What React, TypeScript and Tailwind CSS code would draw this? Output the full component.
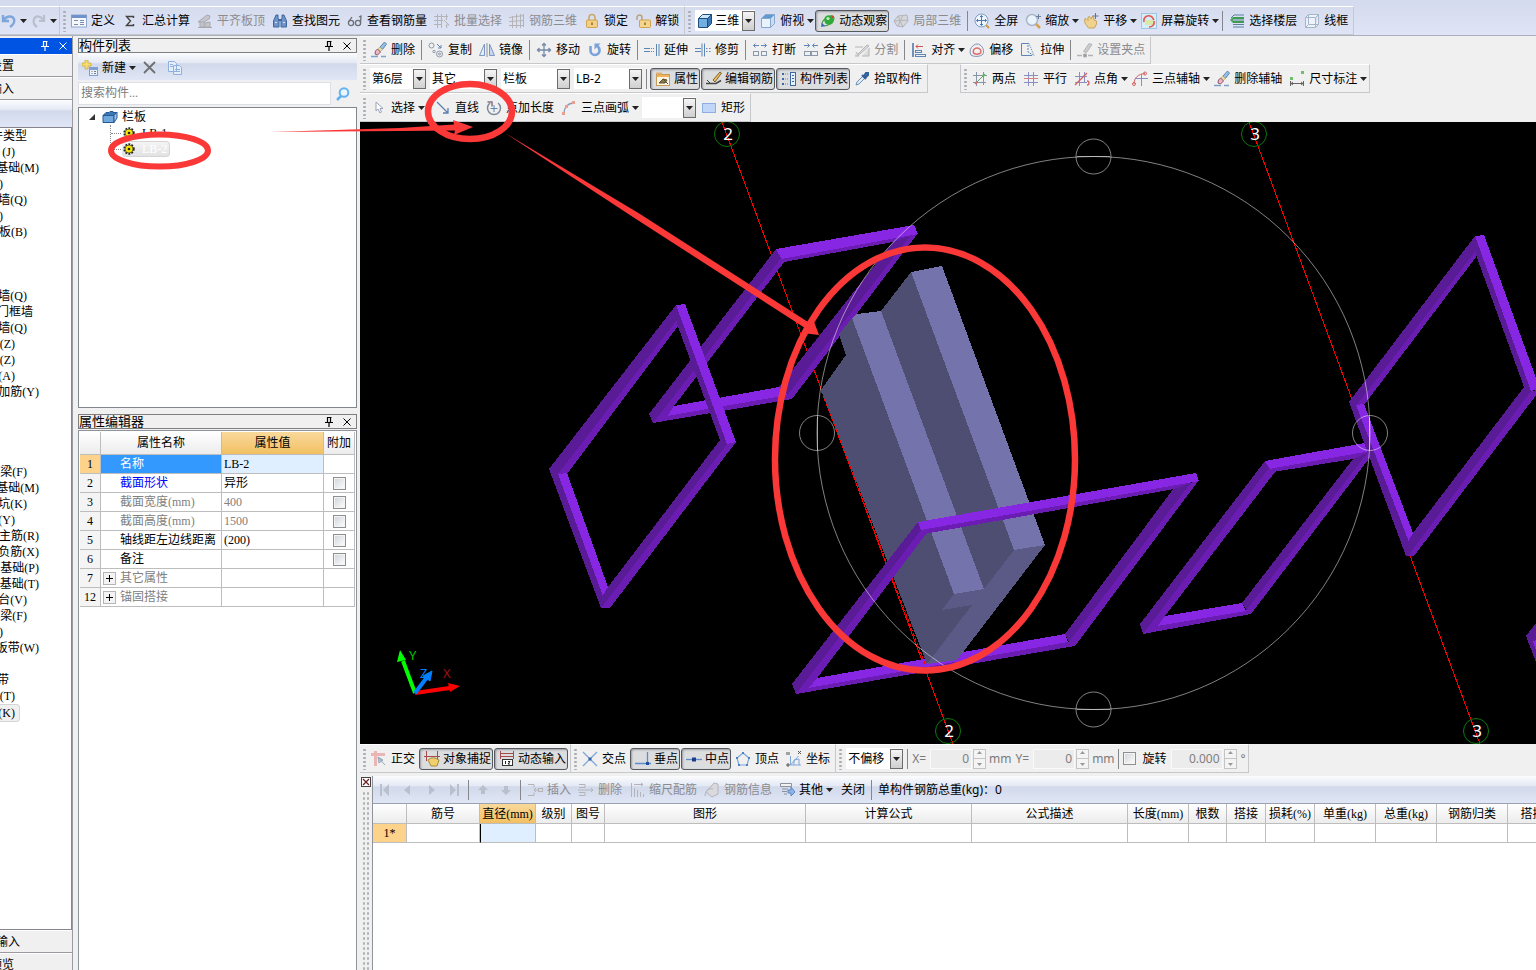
import type { ReactNode } from "react";

const UI = "font-['Noto_Sans','Noto_Sans_CJK_SC',sans-serif]";
const SONG = "font-['Liberation_Serif','Noto_Sans_CJK_SC',serif]";
const BAR_FILL = "bg-[linear-gradient(to_bottom,#fbfcfe_0%,#e4e9f4_36%,#d1d9ea_40%,#e0e6f6_100%)]";

const B = "#5d86b5";
const G = "#b4b4b8";

const ICONS: Record<string, ReactNode> = {
  undo: <path d="M2 2v6h6M3 7c2-4 8-5 10-1 1 3-1 6-4 8" fill="none" stroke="#7fa6dc" strokeWidth="2.4" />,
  redo: <path d="M13 2v6H8M12 7C10 3 5 2 3 6c-1 3 0 6 3 8" fill="none" stroke="#b9bfcc" strokeWidth="2.2" />,
  define: (
    <g>
      <rect x="0.5" y="2" width="15" height="12" fill="#f4f8fd" stroke="#8ea6cc" />
      <path d="M0.5 3.5h15" stroke="#6f93c8" strokeWidth="3" />
      <path d="M3 7.5h4M3 11.5h4M9 7.5h4M9 9.5h4M9 11.5h4" stroke="#7b8aa5" />
    </g>
  ),
  sigma: <path d="M11.5 5V3.500h-7l4 4.500-4 4.500h7V11" fill="none" stroke="#444" strokeWidth="1.400" />,
  level: (
    <g fill="#c4c6cb" stroke="#a6a8ae">
      <path d="M1 9l9-7 3 1-1 3-5 3zM3 9v5h4V9M8 10v4h5V9z" />
      <path d="M1 14.500h14" />
    </g>
  ),
  find: (
    <g fill="#6e93c9" stroke="#3f669f">
      <path d="M4 2h2v3l1 3v6H1.500V8zM10 2h2l2.500 6v6H9V8l1-3z" />
      <path d="M6.500 7h3" strokeWidth="2" />
      <path d="M3 9.500h2M11 9.500h2" stroke="#dbe8f8" />
    </g>
  ),
  glasses: (
    <g fill="none" stroke="#6b7076" strokeWidth="1.300">
      <circle cx="4" cy="10" r="2.600" />
      <circle cx="11" cy="10" r="2.600" />
      <path d="M1.500 9L5 4M13.500 10L14 3l-2 1" />
    </g>
  ),
  batch: (
    <g fill="none" stroke={G}>
      <path d="M0 3.500h14M0 7.500h9M0 11.500h8M3.500 1v14M7.500 1v14M12.500 1v6" />
      <path d="M10 7l5 5h-3l1 3" fill="#ddd" />
    </g>
  ),
  mesh: <path d="M0 4.500l15-2M0 8.500l15-1M0 12.500h15M3.500 3v12M7.500 1v14M11.500 1v14M14.500 1v13" fill="none" stroke={G} />,
  lock: (
    <g>
      <path d="M5 7V4.500a3 3 0 016 0V7" fill="none" stroke="#c9a867" strokeWidth="1.600" />
      <rect x="2.500" y="7" width="11" height="7.500" rx="1" fill="#f3cf83" stroke="#d0a24c" />
      <path d="M8 9.500v2.500" stroke="#8a6a2b" strokeWidth="1.500" />
    </g>
  ),
  unlock: (
    <g>
      <path d="M2 7V4.500a2.500 2.500 0 015 0V7" fill="none" stroke="#b9a37a" strokeWidth="1.500" />
      <rect x="4.500" y="7" width="11" height="7.500" rx="1" fill="#f5d48c" stroke="#d0a24c" />
      <path d="M10 9.500v2.500" stroke="#8a6a2b" strokeWidth="1.500" />
    </g>
  ),
  cube: (
    <g stroke="#1f4d80" strokeLinejoin="round">
      <path d="M1.500 5.500h9v9h-9z" fill="#72aee0" />
      <path d="M1.500 5.500l4-4h9l-4 4z" fill="#cfe6fa" />
      <path d="M10.500 5.500l4-4v9l-4 4z" fill="#3c78b4" />
    </g>
  ),
  cubeTop: (
    <g stroke="#86a7cb" strokeLinejoin="round">
      <path d="M1.500 5.500h9v9h-9z" fill="#e9f3fc" />
      <path d="M1.500 5.500l4-4h9l-4 4z" fill="#5f9bd0" />
      <path d="M10.500 5.500l4-4v9l-4 4z" fill="#c9def2" />
    </g>
  ),
  orbit: (
    <g>
      <ellipse cx="8" cy="8" rx="7" ry="3.500" fill="none" stroke="#3f8f3f" transform="rotate(-35 8 8)" />
      <circle cx="9" cy="7" r="4.800" fill="#2faa3a" />
      <circle cx="8" cy="5.500" r="1.600" fill="#bff0b8" />
      <path d="M11 2l3 1-1 3z" fill="#d4402c" />
      <path d="M1 14l1-4 3 3z" fill="#3567b5" />
    </g>
  ),
  part3d: (
    <g fill="#d5d7dc" stroke={G}>
      <path d="M1 8l4-5 9-1 1 6-5 6-6-1z" />
      <path d="M5 3l5 11M1 8l14-1M10 2l-5 11" fill="none" />
    </g>
  ),
  full: (
    <g>
      <circle cx="7.500" cy="7.500" r="6.500" fill="#eef5fd" stroke="#7f9fcc" />
      <path d="M7.500 2.500v10M2.500 7.500h10M6 4l1.500-1.500L9 4M6 11l1.500 1.500L9 11M4 6L2.500 7.500 4 9M11 6l1.500 1.500L11 9" fill="none" stroke="#4d78b6" />
      <path d="M12 12l3 3" stroke="#cf9b45" strokeWidth="2" />
    </g>
  ),
  zoom: (
    <g>
      <circle cx="7" cy="7" r="5.500" fill="#e8f3fc" stroke="#a9b6c6" strokeWidth="1.500" />
      <path d="M11 11l4 4" stroke="#d6a24d" strokeWidth="2.500" />
      <path d="M13.500 1v5M11 3.500h5" stroke="#6c7f9d" />
    </g>
  ),
  pan: (
    <g>
      <path d="M1.500 6l1.500-.5 2 2L5 4l1.500-.5L8 6l1-2.500 1.500.5L11 7l2.500 1v3l-2 4H5.500L2 10z" fill="#efd28e" stroke="#c9a45a" />
      <path d="M12.500 0v6M9.500 3h6" stroke="#6c7280" />
    </g>
  ),
  screenRotate: (
    <g>
      <rect x="0.500" y="0.500" width="15" height="15" fill="#d7eefa" stroke="#9fc6dd" />
      <rect x="4" y="7" width="8" height="5" fill="#d8e9a8" />
      <path d="M3 9c-1-5 4-8 8-5l2 3M13 8c1 4-2 6-5 6" fill="none" stroke="#e2574f" strokeWidth="1.600" />
    </g>
  ),
  floors: (
    <g fill="none">
      <path d="M2 5l3-3h10" stroke="#5a7f9e" />
      <path d="M4 5h11M4 9h11" stroke="#3f9a52" strokeWidth="2" />
      <path d="M4 7h11M4 11.500h11M4 14h11" stroke="#5a7f9e" />
      <path d="M1 7l3-3v6z" fill="#47a65a" />
    </g>
  ),
  wire: (
    <g fill="#edf3fa" stroke="#a6b6ca" strokeLinejoin="round">
      <path d="M1.500 4.500h10v10h-10zM1.500 4.500l3-3h10l-3 3M11.500 14.500l3-3v-10" />
      <path d="M4.500 1.500v10h10M1.500 14.500l3-3" fill="none" />
    </g>
  ),
  erase: (
    <g>
      <path d="M0 14.500h7M10 14.500h5" stroke="#7fa0c8" strokeWidth="1.500" />
      <path d="M9 5l4.500-5 2 2-4 5.500z" fill="#8fc0ea" stroke="#6585ac" />
      <path d="M9 5l2.500 2.500-2 2L6.500 7z" fill="#e8d9a2" stroke="#af9a55" strokeWidth="0.500" />
      <path d="M6.500 7l3 3-3 3-2.500-1 .5-3z" fill="#f3b7c0" stroke="#8a5a78" />
    </g>
  ),
  copy: (
    <g fill="none" stroke="#8b99aa">
      <circle cx="3.500" cy="3.500" r="2.500" />
      <circle cx="11.500" cy="12" r="3" />
      <circle cx="11.500" cy="12" r="1" />
      <circle cx="6" cy="9.500" r="1.200" />
      <path d="M9 2l4 4M13 3v3h-3" stroke={B} />
    </g>
  ),
  mirror: (
    <g fill="none" stroke="#7c97c4">
      <path d="M5.500 2v11.500H0.500z" fill="#e5edf8" />
      <path d="M10.500 2v11.500h5z" fill="#c5d6ee" />
      <path d="M8 1v14" stroke="#8a93a5" />
    </g>
  ),
  move: <path d="M8 1.500v13M1.500 8h13M6 3.500l2-2 2 2M6 12.500l2 2 2-2M3.500 6l-2 2 2 2M12.500 6l2 2-2 2" fill="none" stroke="#7489a6" strokeWidth="1.300" />,
  rotate: (
    <g>
      <path d="M3.500 4v4.500a4.500 4.500 0 009 0c0-2-1-3.500-2-4.500" fill="none" stroke="#7aa2dc" strokeWidth="2.600" />
      <path d="M7.500 1.500h6l-6 6z" fill="#7aa2dc" />
    </g>
  ),
  extend: <path d="M0 6.500h6M0 9.500h6M7 6.500h1M7 9.500h1M9 6.500h1M9 9.500h1M12.500 2v12M15 2v12" stroke={B} fill="none" />,
  trim: <path d="M0 6.500h6M0 9.500h6M7 1.500v13M9.500 1.500v13M11 6.500h1.500M11 9.500h1.500M14 6.500h1.500M14 9.500h1.500" stroke={B} fill="none" />,
  brk: (
    <g fill="none" stroke={B}>
      <path d="M7 3.500H1.500M3.500 1.500l-2 2 2 2M9 3.500h5.500M12.500 1.500l2 2-2 2" />
      <rect x="1.500" y="9.500" width="5" height="4" stroke="#8a98aa" />
      <rect x="9.500" y="9.500" width="5" height="4" stroke="#8a98aa" />
    </g>
  ),
  merge: (
    <g fill="none" stroke={B}>
      <path d="M1 3.500h5.500M4.500 1.500l2 2-2 2M15 3.500H9.500M11.500 1.500l-2 2 2 2" />
      <rect x="1.500" y="9.500" width="6" height="4" stroke="#8a98aa" />
      <rect x="8.500" y="9.500" width="6" height="4" stroke="#8a98aa" />
    </g>
  ),
  split: <path d="M1 5h8M1 14h4l-3-4M8 14h7V6M4 12l9-9 2 1-9 8z" fill="#ddd" stroke={G} />,
  align: (
    <g fill="none">
      <path d="M2 1v14" stroke="#4a6fa5" strokeWidth="1.500" />
      <path d="M12 4.500H5M7 2.500l-2 2 2 2" stroke="#d05252" />
      <rect x="4.500" y="8.500" width="6" height="2" stroke={B} />
      <rect x="4.500" y="12.500" width="10" height="2" stroke={B} />
    </g>
  ),
  offset: (
    <g fill="none">
      <path d="M2 13C-1 8 4 2 8 2s8 5 6 10c-2 3-10 3-12 1z" stroke="#7f93b5" />
      <path d="M4.500 11c-1-3 1-5 3.500-5s5 2 3.500 5c-1 1.500-6 1.500-7 0z" stroke="#e06a6a" strokeWidth="1.500" />
    </g>
  ),
  stretch: (
    <g fill="none" stroke={B}>
      <path d="M9 1.500H1.500v12H12" />
      <path d="M8 3v7l5 3" strokeDasharray="2 1" />
      <path d="M9 1.500l5 12" strokeDasharray="1 1" />
    </g>
  ),
  grip: (
    <g stroke={G}>
      <path d="M0 13.500h5M11 13.500h5" strokeWidth="1.500" />
      <path d="M6.500 12h3v3h-3z" fill="#999" />
      <path d="M6.500 9.500l5.500-8 3 1-5.500 8z" fill="#ccc" />
    </g>
  ),
  props: (
    <g>
      <rect x="1.500" y="3.500" width="13" height="11" fill="#fdf6e4" stroke="#c79a55" />
      <path d="M2 5h12" stroke="#f0b45d" strokeWidth="2" />
      <path d="M1 2.500h6" stroke="#e0b070" strokeWidth="2" />
      <path d="M4 12l4-4 4 1-2 3zM8 8l5 5" fill="#8c7a4f" stroke="#5a5130" />
    </g>
  ),
  editBar: (
    <g>
      <path d="M0 12.500h10l5-3" fill="none" stroke="#444" strokeWidth="1.500" />
      <path d="M7 9l7-8 1.500 1L9 11z" fill="#eebf5a" stroke="#80622c" />
      <path d="M1 9l3 3" stroke="#444" />
    </g>
  ),
  list: (
    <g>
      <path d="M1 3h2M1 8h2M1 13h2" stroke="#3f66a5" strokeWidth="2" />
      <path d="M4 3h4M4 8h4M4 13h4" stroke="#888" strokeDasharray="1 1" />
      <rect x="9.500" y="1.500" width="5" height="13" fill="#e7f0fb" stroke="#3f66a5" />
      <path d="M11 4.500h2M11 7.500h2M11 10.500h2" stroke="#3f66a5" />
    </g>
  ),
  pick: (
    <g>
      <path d="M2 14l1-3 6-6 2 2-6 6z" fill="#dcecf9" stroke="#6f8fb5" />
      <path d="M8 4l4 4M10 5l2-3 2 0 0 2-3 3" fill="#4779b8" stroke="#345f98" strokeWidth="2" />
    </g>
  ),
  twoPt: (
    <g fill="none" stroke="#8793a8">
      <path d="M1 4.500h14M1 11.500h13M4.500 1v14M11.500 1v13" />
      <path d="M3 13L13 3" stroke="#5aa95a" />
      <circle cx="4" cy="12" r="1.300" fill="#d66" stroke="none" />
      <circle cx="12" cy="4" r="1.300" fill="#5b5" stroke="none" />
    </g>
  ),
  parallel: (
    <g fill="none" stroke="#8a8fc2">
      <path d="M1 4.500h14M1 11.500h14M5.500 1v14M10.500 1v14" />
      <path d="M1 7.500h14" stroke="#d98080" />
    </g>
  ),
  angle: (
    <g fill="none" stroke="#8a8fc2">
      <path d="M1 5.500h12M1 11.500h12M5.500 1v14M10.500 1v10" />
      <path d="M1 14L13 2M13 10a2 2 0 010 4" stroke="#d86060" strokeWidth="1.300" />
    </g>
  ),
  threeAxis: (
    <g fill="none" stroke="#8a8fc2">
      <path d="M3 7.500h13M9.500 3v12" />
      <path d="M2 13C2 7 6 3 13 2.500" stroke="#d86060" />
      <circle cx="2" cy="13" r="1.500" stroke="#d86060" />
      <circle cx="13" cy="2.500" r="1.500" stroke="#d86060" />
    </g>
  ),
  dim: (
    <g fill="none" stroke="#666">
      <path d="M1.500 10v5M14.500 10v5M2 12.500h12M4 11l-2 1.500L4 14M12 11l2 1.500-2 1.500" />
      <path d="M1 7.500h3M12 1.500h3" stroke="#6cbf6c" strokeWidth="3" />
    </g>
  ),
  cursor: <path d="M5 2v9l2-2 2 4 1.500-1L9 8.500h3z" fill="#fff" stroke="#96a3b8" />,
  line: <path d="M2 2l11 11M13 8v5H8" fill="none" stroke="#5b7fae" strokeWidth="1.300" />,
  pointLen: (
    <g fill="none" stroke="#7b8798">
      <path d="M4 3a6.500 6.500 0 108 0" strokeWidth="1.500" />
      <path d="M8 5v7M4.500 8.500h7" stroke={B} />
      <path d="M1.500 2h4.500v4.500" stroke="#8a6f86" strokeWidth="1.500" />
    </g>
  ),
  arc: (
    <g fill="none">
      <path d="M3 14C3 7 7 3 13 3" stroke="#8c9bb5" strokeWidth="1.300" />
      <path d="M1 12h3v3H1zM4 5h3v3H4zM11 1h3v3h-3z" fill="#e9a090" />
    </g>
  ),
  rect: <rect x="1.500" y="3.500" width="13" height="9" fill="#c2d7f8" stroke="#8faee0" />,
  ortho: (
    <g>
      <path d="M0 3.500h14M4.500 0v15" stroke="#e9b5b5" strokeWidth="3" />
      <path d="M7 6l7 8M7 6l1 6 4-3z" fill="#b9c5d3" stroke="#9aa8b8" />
    </g>
  ),
  snap: (
    <g>
      <path d="M2.500 0v10M13.500 0v8M0 5.500h16" stroke="#a34b4b" />
      <path d="M4 9l3-2 4 0 4 2-2 6H7z" fill="#efd06d" stroke="#a98b3d" />
    </g>
  ),
  dyn: (
    <g fill="none" stroke="#a34b4b">
      <path d="M1 2.500h14M1 5.500h14M1.500 0v8M14.500 0v8" />
      <rect x="3.500" y="8.500" width="10" height="6" fill="#fff" stroke="#333" />
      <path d="M6.500 10v3M9 10.500h2l-2 2.500h2" stroke="#222" />
    </g>
  ),
  cross: (
    <g>
      <path d="M1 1l14 14M15 1L1 15" stroke="#7ea6d8" strokeWidth="1.300" />
      <path d="M6.500 6.500h3v3h-3z" fill="#3668ad" />
    </g>
  ),
  perp: (
    <g>
      <path d="M12.500 1v12M0 12.500h16" stroke="#5b8cce" strokeWidth="1.300" />
      <path d="M11 11h3v3h-3z" fill="#1d4f9a" />
    </g>
  ),
  mid: (
    <g>
      <path d="M0 8.500h16" stroke="#5b8cce" strokeWidth="1.300" />
      <path d="M6 6.500h4v4H6z" fill="#1d3f8a" />
    </g>
  ),
  vertex: (
    <g>
      <path d="M8 2l6 5-2 7H4L2 7z" fill="none" stroke="#7ea6d8" strokeWidth="1.200" />
      <path d="M7 1h2v2H7zM13 6h2v2h-2zM1 6h2v2H1zM11 13h2v2h-2zM3 13h2v2H3z" fill="#4d80c4" />
    </g>
  ),
  coord: (
    <g fill="none" stroke="#7ea6d8">
      <path d="M4.500 5v9H15M4.500 14l8-9M8 14V9l5-1v6" />
      <path d="M1 1v3M3 1v3M12 0l3 3M15 0l-3 3M1 13h2v2H1z" stroke="#555" />
    </g>
  ),
  insert: (
    <g fill="none" stroke={G}>
      <path d="M1 2.500h6v3M1 13.500h6v-3M7 8h4M9 6L7 8l2 2" />
      <rect x="11.500" y="6.500" width="4" height="3" />
    </g>
  ),
  remove: (
    <g fill="none" stroke={G}>
      <path d="M1 2.500h6v3H1M1 13.500h6v-3H1M0 8h9" />
      <path d="M9 8h6M13 6l2 2-2 2" />
    </g>
  ),
  scale: <path d="M2.500 1v14M5 2.500h9M12 1l2 1.500L12 4M5.500 6v9M8.500 8v7M11.500 10v5M14.500 12v3" fill="none" stroke={G} />,
  info: (
    <g fill="#d9d9de" stroke={G}>
      <path d="M2 10l8-9 4 1v10l-6 3z" />
      <path d="M1 14c0-6 5-8 8-7" fill="none" />
    </g>
  ),
  other: (
    <g>
      <path d="M1.500 1.500h11v3h-11zM3 7h6M3 9.500h5M5 12h3" fill="#f2f2f2" stroke="#8a929e" />
      <path d="M9 8h3V5l4 5-4 4v-3H9z" fill="#8fb4e8" stroke="#5d86c4" />
    </g>
  ),
  newItem: (
    <g>
      <path d="M3 0h3v3h3v3H6v3H3V6H0V3h3z" fill="#f6dc6c" stroke="#c9a63c" strokeWidth="0.700" />
      <rect x="7.500" y="7.500" width="8" height="8" fill="#eaf2fc" stroke="#7f9fd0" />
      <path d="M8 9h7" stroke="#7f9fd0" strokeWidth="2" />
      <path d="M9.500 11.500h1M12 11.500h2M9.500 13.500h1M12 13.500h2" stroke="#778" />
    </g>
  ),
  del: <path d="M2 2l11 11M13 2L2 13" stroke="#6f6f6f" strokeWidth="1.800" />,
  pages: (
    <g fill="#e4eefb" stroke="#8fb0de">
      <path d="M1.500 1.500h6l2 2v8h-8zM6.500 5.500h6l2 2v7h-8z" />
      <path d="M8 9.500h5M8 11.500h5M3 4.500h3M3 6.500h3" />
    </g>
  ),
  search: (
    <g fill="none" stroke="#62b2f0" strokeWidth="2">
      <circle cx="9" cy="6.500" r="4.300" fill="#eaf6ff" />
      <path d="M6 10l-4 4" strokeWidth="2.500" />
    </g>
  ),
  first: <path d="M3 2h2v12H3zM12 2v12L6 8z" fill="#b8bfcd" />,
  prev: <path d="M10 3v10L4 8z" fill="#b8bfcd" />,
  next: <path d="M6 3v10l6-5z" fill="#b8bfcd" />,
  last: <path d="M11 2h2v12h-2zM4 2v12l6-6z" fill="#b8bfcd" />,
  up: <path d="M8 3l5 5h-3v4H6V8H3z" fill="#b8bfcd" />,
  down: <path d="M8 13l5-5h-3V4H6v4H3z" fill="#b8bfcd" />,
  box: (
    <g stroke="#245a92">
      <path d="M1 6.500h11v7H1z" fill="#6fa8dc" />
      <path d="M1 6.500l3-3h3l1-1h3v1h3.500l-2.500 3z" fill="#3b78b5" />
      <path d="M12 6.500l3-3.500v6l-3 4.500z" fill="#9cc5ea" />
    </g>
  ),
  gear: (
    <g>
      <circle cx="7" cy="8" r="4.700" fill="none" stroke="#222" strokeWidth="2" strokeDasharray="1.800 1.200" />
      <circle cx="7" cy="8" r="4" fill="#f5e800" stroke="#333" strokeWidth="0.700" />
      <circle cx="7" cy="8" r="1.300" fill="#222" />
    </g>
  ),
};

function Icon({ name }: { name: string }) {
  return (
    <svg className="size-4 shrink-0" viewBox="0 0 16 16" aria-hidden="true">
      {ICONS[name]}
    </svg>
  );
}

function Caret() {
  return (
    <svg className="-ml-px h-1 w-[7px] shrink-0" viewBox="0 0 7 4" aria-hidden="true">
      <path d="M0 0h7L3.500 4z" fill="#222" />
    </svg>
  );
}

type ToolProps = { icon?: string; label?: string; name?: string; menu?: boolean; pressed?: boolean; disabled?: boolean };

function Tool({ icon, label, name, menu, pressed, disabled }: ToolProps) {
  const shape = pressed
    ? "ml-px h-[22px] gap-[3px] rounded-[3px] border border-[#55585e] bg-[#dcdddf] pl-1 pr-px shadow-[inset_1px_1px_2px_#9a9ca2]"
    : menu
      ? "ml-1 gap-1"
      : "ml-1 mr-[3px] gap-1";
  return (
    <button
      type="button"
      aria-label={name}
      aria-pressed={pressed}
      disabled={disabled}
      className={`flex shrink-0 items-center whitespace-nowrap ${shape} ${disabled ? "text-[#8b8b8f]" : "text-black"}`}
    >
      {icon && <Icon name={icon} />}
      {label && <span>{label}</span>}
      {menu && <Caret />}
    </button>
  );
}

function Sep() {
  return <span className="mr-0.5 ml-[3px] h-5 w-px shrink-0 bg-[#85878c]" />;
}

function Grip() {
  return (
    <span className="mr-px ml-[3px] h-[22px] w-[3px] shrink-0 bg-[radial-gradient(circle,#a9abb2_1px,transparent_1.5px)] bg-[length:3px_4px]" />
  );
}

function Group({ children, className = "" }: { children: ReactNode; className?: string }) {
  return (
    <div role="toolbar" className={`flex shrink-0 items-center border-t border-r border-b border-t-white border-r-[#c6c8cc] border-b-[#c6c8cc] pr-0.5 ${className}`}>
      {children}
    </div>
  );
}

function Combo({ value, label, width, icon }: { value: string; label: string; width: string; icon?: string }) {
  return (
    <span className={`mr-px ml-[3px] grid h-[21px] shrink-0 items-center bg-white ${width}`}>
      {icon && (
        <span className="col-start-1 row-start-1 pl-0.5">
          <Icon name={icon} />
        </span>
      )}
      <select aria-label={label} className={`col-start-1 row-start-1 w-full appearance-none bg-transparent leading-4 outline-none ${icon ? "pl-5" : "pl-0.5"}`}>
        <option>{value}</option>
      </select>
      <span className="pointer-events-none col-start-1 row-start-1 flex h-5 w-[13px] items-center justify-center justify-self-end border border-[#6c6c6c] bg-linear-to-b from-[#f5f5f5] to-[#cfcfcf]">
        <Caret />
      </span>
    </span>
  );
}

function TopBar() {
  return (
    <header className="border-b border-[#a9b0c0] bg-linear-to-b from-[#d3daec] to-[#dfe5f6]">
      <div className="h-1.5 bg-[#d4dbee]" />
      <div className="flex h-[29px]">
        <Group className="-ml-[3px]">
          <Tool icon="undo" name="撤销" menu />
          <Tool icon="redo" name="恢复" menu disabled />
        </Group>
        <Group>
          <Grip />
          <Tool icon="define" label="定义" />
          <Tool icon="sigma" label="汇总计算" />
          <Tool icon="level" label="平齐板顶" disabled />
          <Tool icon="find" label="查找图元" />
          <Tool icon="glasses" label="查看钢筋量" />
          <Tool icon="batch" label="批量选择" disabled />
          <Tool icon="mesh" label="钢筋三维" disabled />
          <Tool icon="lock" label="锁定" />
          <Tool icon="unlock" label="解锁" />
        </Group>
        <Group>
          <Grip />
          <Combo value="三维" label="视图" width="w-[60px]" icon="cube" />
          <Tool icon="cubeTop" label="俯视" menu />
          <Tool icon="orbit" label="动态观察" pressed />
          <Tool icon="part3d" label="局部三维" disabled />
          <Sep />
          <Tool icon="full" label="全屏" />
          <Tool icon="zoom" label="缩放" menu />
          <Tool icon="pan" label="平移" menu />
          <Tool icon="screenRotate" label="屏幕旋转" menu />
          <Sep />
          <Tool icon="floors" label="选择楼层" />
          <Tool icon="wire" label="线框" />
        </Group>
      </div>
    </header>
  );
}

function EditBars() {
  return (
    <div className="flex flex-col items-start">
      <Group className="h-7">
        <Grip />
        <Tool icon="erase" label="删除" />
        <Sep />
        <Tool icon="copy" label="复制" />
        <Tool icon="mirror" label="镜像" />
        <Sep />
        <Tool icon="move" label="移动" />
        <Tool icon="rotate" label="旋转" />
        <Sep />
        <Tool icon="extend" label="延伸" />
        <Tool icon="trim" label="修剪" />
        <Sep />
        <Tool icon="brk" label="打断" />
        <Tool icon="merge" label="合并" />
        <Tool icon="split" label="分割" disabled />
        <Sep />
        <Tool icon="align" label="对齐" menu />
        <Tool icon="offset" label="偏移" />
        <Tool icon="stretch" label="拉伸" />
        <Sep />
        <Tool icon="grip" label="设置夹点" disabled />
      </Group>
      <div className="flex h-[29px]">
        <Group>
          <Grip />
          <Combo value="第6层" label="楼层" width="w-14" />
          <Combo value="其它" label="构件分类" width="w-[67px]" />
          <Combo value="栏板" label="构件类型" width="w-[69px]" />
          <Combo value="LB-2" label="构件" width="w-[68px]" />
          <Sep />
          <Tool icon="props" label="属性" pressed />
          <Tool icon="editBar" label="编辑钢筋" pressed />
          <Tool icon="list" label="构件列表" pressed />
          <Tool icon="pick" label="拾取构件" />
        </Group>
        <Group className="ml-8 border-l border-l-[#c6c8cc]">
          <Grip />
          <Tool icon="twoPt" label="两点" />
          <Tool icon="parallel" label="平行" />
          <Tool icon="angle" label="点角" menu />
          <Tool icon="threeAxis" label="三点辅轴" menu />
          <Tool icon="erase" label="删除辅轴" />
          <Tool icon="dim" label="尺寸标注" menu />
        </Group>
      </div>
      <Group className="h-[29px]">
        <Grip />
        <Tool icon="cursor" label="选择" menu />
        <span className="w-1.5" />
        <Tool icon="line" label="直线" />
        <Tool icon="pointLen" label="点加长度" />
        <Tool icon="arc" label="三点画弧" menu />
        <Combo value="" label="画弧方式" width="w-[54px]" />
        <Tool icon="rect" label="矩形" />
      </Group>
    </div>
  );
}

function PinClose({ light }: { light?: boolean }) {
  const c = light ? "#fff" : "#000";
  return (
    <span className="flex items-center gap-2 pr-1">
      <button type="button" aria-label="固定">
        <svg className="block size-2.5" viewBox="0 0 10 10">
          <path d="M3 0.500h4.500M3.500 0v5.500M6.500 0v5.500M1 5.500h8M5 5.500V10" stroke={c} fill="none" strokeWidth="1.200" />
        </svg>
      </button>
      <button type="button" aria-label="关闭">
        <svg className="block size-2.5" viewBox="0 0 10 10">
          <path d="M1.500 1.500l7 7M8.500 1.500l-7 7" stroke={c} />
        </svg>
      </button>
    </span>
  );
}

const MODULES: [number, string, string][] = [
  [0, "件类型", "w-[27px]"], [1, "(J)", "w-[15px]"], [2, "基础(M)", "w-[39px]"], [3, ")", "w-[3px]"],
  [4, "墙(Q)", "w-[27px]"], [5, ")", "w-[3px]"], [6, "板(B)", "w-[27px]"], [10, "墙(Q)", "w-[27px]"],
  [11, "门框墙", "w-[33px]"], [12, "墙(Q)", "w-[27px]"], [13, "(Z)", "w-[15px]"], [14, "(Z)", "w-[15px]"],
  [15, "(A)", "w-[15px]"], [16, "加筋(Y)", "w-[39px]"], [21, "梁(F)", "w-[27px]"], [22, "基础(M)", "w-[39px]"],
  [23, "坑(K)", "w-[27px]"], [24, "(Y)", "w-[15px]"], [25, "主筋(R)", "w-[39px]"], [26, "负筋(X)", "w-[39px]"],
  [27, "基础(P)", "w-[39px]"], [28, "基础(T)", "w-[39px]"], [29, "台(V)", "w-[27px]"], [30, "梁(F)", "w-[27px]"],
  [31, ")", "w-[3px]"], [32, "板带(W)", "w-[39px]"], [34, "带", "w-[9px]"], [35, "(T)", "w-[15px]"], [36, "(K)", "w-[15px]"],
];
const MODULE_ROWS = Array.from({ length: 37 }, (_, i) => MODULES.find((m) => m[0] === i));

function SideButton({ label, width, className = "" }: { label: string; width: string; className?: string }) {
  return (
    <button type="button" className={`flex h-[23px] w-full shrink-0 items-center overflow-hidden border-t border-b border-t-white border-b-[#9a9aa0] ${className}`}>
      <span className={`flex justify-end whitespace-nowrap ${width}`}>{label}</span>
    </button>
  );
}

function ModulePanel() {
  return (
    <aside className={`flex w-[73px] shrink-0 flex-col overflow-hidden border-r border-[#9a9aa0] pt-0.5 ${SONG}`}>
      <div className="flex h-4 shrink-0 items-center justify-end bg-[#0054e3]">
        <PinClose light />
      </div>
      <SideButton label="设置" width="w-[14px]" />
      <SideButton label="输入" width="w-[14px]" />
      <div className={`h-[27px] shrink-0 ${BAR_FILL}`} />
      <ul className="min-h-0 flex-1 overflow-hidden border-t border-r border-b border-[#85858f] bg-white">
        {MODULE_ROWS.map((row, i) => (
          <li key={i} className="h-4">
            {row && (
              <button type="button" className={`flex h-4 justify-end whitespace-nowrap ${row[2]} ${i === 36 ? "box-content rounded-r-sm border border-l-0 border-[#d5d5d5] bg-[#f0f0f0] pr-1" : ""}`}>
                {row[1]}
              </button>
            )}
          </li>
        ))}
      </ul>
      <SideButton label="输入" width="w-5" />
      <SideButton label="预览" width="w-[14px]" className="-mb-1.5" />
    </aside>
  );
}

function PanelTitle({ children }: { children: ReactNode }) {
  return (
    <div className="flex h-[15px] shrink-0 items-center justify-between overflow-hidden border border-[#7f7f7f] bg-[#f0f0f0]">
      <h2 className="text-[13px] leading-[14px]">{children}</h2>
      <PinClose />
    </div>
  );
}

function ComponentList() {
  return (
    <section className={`flex h-[370px] shrink-0 flex-col ${SONG}`}>
      <PanelTitle>构件列表</PanelTitle>
      <div className={`flex h-[27px] shrink-0 items-center gap-0.5 pt-0.5 ${UI} ${BAR_FILL}`}>
        <Tool icon="newItem" label="新建" menu />
        <Tool icon="del" name="删除构件" />
        <Tool icon="pages" name="复制构件" />
      </div>
      <div className="flex h-[27px] shrink-0 items-center justify-between bg-[#f0f0f0] pr-1.5">
        <input aria-label="搜索构件" placeholder="搜索构件..." className="h-[23px] w-[253px] border border-[#dcdfe6] bg-white pl-0.5 outline-none placeholder:text-[#7c7c7c]" />
        <button type="button" aria-label="搜索">
          <Icon name="search" />
        </button>
      </div>
      <div className="flex-1 border border-[#82868f] bg-white pt-px pl-[9px]">
        <div className="flex h-4 items-center">
          <svg className="mr-1.5 size-2" viewBox="0 0 8 8" aria-hidden="true">
            <path d="M7 1v6H1z" fill="#333" />
          </svg>
          <Icon name="box" />
          <span className="pl-1">栏板</span>
        </div>
        <ul className="ml-[22px] border-l border-dotted border-[#888]">
          <li className="flex h-4 items-center">
            <span className="mr-px w-2.5 border-t border-dotted border-[#888]" />
            <Icon name="gear" />
            <span className="pl-1">LB-1</span>
          </li>
          <li className="flex h-4 items-center">
            <span className="mr-px w-2.5 border-t border-dotted border-[#888]" />
            <span className="flex h-4 items-center rounded-sm border border-l-0 border-[#d4d4d4] bg-linear-to-b from-[#f4f4f4] to-[#e2e2e2] pr-0.5">
              <Icon name="gear" />
              <span className="pl-1 text-white">LB-2</span>
            </span>
          </li>
        </ul>
      </div>
    </section>
  );
}

type Prop = { n: number; name: string; value: string; tone: string; check?: boolean; group?: boolean };
const PROPS: Prop[] = [
  { n: 1, name: "名称", value: "LB-2", tone: "text-white" },
  { n: 2, name: "截面形状", value: "异形", tone: "text-[#0000ff]", check: true },
  { n: 3, name: "截面宽度(mm)", value: "400", tone: "text-[#808080]", check: true },
  { n: 4, name: "截面高度(mm)", value: "1500", tone: "text-[#808080]", check: true },
  { n: 5, name: "轴线距左边线距离", value: "(200)", tone: "text-black", check: true },
  { n: 6, name: "备注", value: "", tone: "text-black", check: true },
  { n: 7, name: "其它属性", value: "", tone: "text-[#808080]", group: true },
  { n: 12, name: "锚固搭接", value: "", tone: "text-[#808080]", group: true },
];
const CHECK = "block size-[13px] appearance-none border border-[#8e8f8f] bg-linear-to-br from-[#cfd3d9] to-white shadow-[inset_0_0_0_1px_#f4f4f4]";
const CELL = "border-r border-b border-[#bdbdbd] p-0";
const HEAD = "bg-linear-to-b from-white to-[#ececec] font-normal";
const GOLD = "bg-linear-to-b from-[#f9d99b] to-[#f2c062] font-normal";

function PropertyEditor() {
  return (
    <section className={`flex min-h-0 flex-1 flex-col pt-1.5 ${SONG}`}>
      <PanelTitle>属性编辑器</PanelTitle>
      <div className="mt-px min-h-0 flex-1 overflow-hidden border border-b-0 border-[#8f939c] bg-white p-px">
        <table className="w-full table-fixed border-separate border-spacing-0">
          <thead>
            <tr className="h-[23px]">
              <th className={`w-[21px] ${CELL} ${HEAD}`} />
              <th className={`w-[121px] ${CELL} ${HEAD}`}>属性名称</th>
              <th className={`w-[102px] ${CELL} ${GOLD}`}>属性值</th>
              <th className={`${CELL} ${HEAD}`}>附加</th>
            </tr>
          </thead>
          <tbody>
            {PROPS.map((p) => (
              <tr key={p.n} className="h-[19px]">
                <th className={`${CELL} font-normal ${p.n === 1 ? "bg-[#fdd28b]" : "bg-[#f4f4f4]"}`}>{p.n}</th>
                <td className={`${CELL} ${p.tone} ${p.n === 1 ? "bg-[#3399ff]" : ""}`}>
                  <span className="flex items-center whitespace-nowrap">
                    <span className="flex w-[19px] shrink-0 pl-0.5">
                      {p.group && (
                        <button type="button" aria-label={`展开${p.name}`} className="flex size-[13px] items-center justify-center border border-[#b5b5b5] bg-[#f3f3f3]">
                          <svg className="size-[7px]" viewBox="0 0 7 7">
                            <path d="M0 3.500h7M3.500 0v7" stroke="#000" />
                          </svg>
                        </button>
                      )}
                    </span>
                    {p.name}
                  </span>
                </td>
                <td className={`${CELL} ${p.n === 1 ? "bg-[#dfefff]" : ""} ${p.n === 3 || p.n === 4 ? "text-[#808080]" : ""}`}>
                  <span className="pl-0.5">{p.value}</span>
                </td>
                <td className={CELL}>
                  <span className="flex justify-center">
                    {p.check && <input type="checkbox" aria-label={`附加${p.name}`} className={CHECK} />}
                  </span>
                </td>
              </tr>
            ))}
          </tbody>
        </table>
      </div>
    </section>
  );
}

const LIGHT = "#8727e3";
const MIDTONE = "#6a1cb3";
const DARK = "#5a1b96";

const FRAME_BACK: [string, string][] = [
  [DARK, "893,242 912,234 787,397 779,387"],
  [MIDTONE, "910,236 918,233 792,399 786,397"],
  [MIDTONE, "781,257 917,233 893,242 784,262"],
  [LIGHT, "776,249 914,225 918,234 781,259"],
  [DARK, "776,249 649,414 653,423 781,258"],
  [MIDTONE, "781,258 785,261 674,406 667,417 653,423"],
  [LIGHT, "674,406 779,387 788,396 667,417"],
  [MIDTONE, "667,416 788,395 792,399 653,423"],
];
const FRAME_LEFT: [string, string][] = [
  [DARK, "549,469 676,305 680,316 558,474"],
  [MIDTONE, "558,474 680,316 678,326 567,474"],
  [DARK, "676,305 727,444 720,440 677,324"],
  [DARK, "549,469 558,473 604,596 601,608"],
  [LIGHT, "558,474 567,473 608,587 603,596"],
  [DARK, "720,440 728,444 603,608 601,608 603,595 608,587"],
  [MIDTONE, "727,444 736,442 610,608 601,608"],
  [LIGHT, "676,305 685,304 736,442 727,444"],
];
const FRAME_FRONT: [string, string][] = [
  [DARK, "1174,488 1194,482 1070,644 1065,634"],
  [MIDTONE, "1190,484 1199,480 1075,646 1068,643"],
  [MIDTONE, "921,529 1198,480 1174,489 924,534"],
  [LIGHT, "918,522 1196,473 1199,481 921,530"],
  [DARK, "918,522 792,684 796,694 921,530"],
  [MIDTONE, "921,530 926,534 818,677 808,689 796,694"],
];
const FRAME_FRONT_BASE: [string, string][] = [
  [LIGHT, "817,678 1065,634 1068,642 808,689"],
  [MIDTONE, "808,688 1068,642 1075,646 796,694"],
];
const FRAME_MID: [string, string][] = [
  [DARK, "1353,459 1371,450 1248,612 1242,603"],
  [MIDTONE, "1369,451 1377,448 1251,614 1245,612"],
  [MIDTONE, "1269,468 1374,450 1353,459 1273,472"],
  [LIGHT, "1265,461 1370,442 1376,450 1269,469"],
  [DARK, "1265,461 1140,624 1143,634 1269,468"],
  [MIDTONE, "1269,468 1275,472 1165,616 1157,627 1143,634"],
  [LIGHT, "1165,616 1242,603 1246,611 1157,627"],
  [MIDTONE, "1157,626 1246,611 1251,614 1143,634"],
];
const FRAME_RIGHT: [string, string][] = [
  [DARK, "1349,402 1475,236 1478,248 1356,406"],
  [MIDTONE, "1356,406 1478,248 1476,257 1364,405"],
  [DARK, "1475,236 1531,391 1524,387 1476,255"],
  [DARK, "1349,402 1357,405 1410,540 1406,556"],
  [LIGHT, "1356,405 1364,404 1413,533 1409,542"],
  [DARK, "1524,387 1532,391 1410,556 1406,556 1409,540 1413,533"],
  [MIDTONE, "1531,391 1540,390 1414,556 1408,556"],
  [LIGHT, "1475,236 1484,235 1540,389 1531,391"],
  [DARK, "1526,636 1536,623 1536,662"],
  [LIGHT, "1533,641 1536,640 1536,651"],
];
const PARAPET: [string, string][] = [
  ["#4e4d72", "839,334 852,318 954,594 942,610 972,605 927,664 821,390 846,355"],
  ["#7473ac", "852,318 857,314 881,311 984,589 954,594"],
  ["#4e4d72", "881,311 911,272 1014,550 984,589"],
  ["#7473ac", "911,272 942,266 1045,545 1014,550"],
  ["#5b5a86", "1014,550 1045,545 957,660 927,664 972,605 942,610 954,594 984,589"],
];

function Solid({ faces }: { faces: [string, string][] }) {
  return (
    <g shapeRendering="crispEdges">
      {faces.map(([fill, points]) => (
        <polygon key={points} fill={fill} points={points} />
      ))}
    </g>
  );
}

const BUBBLES: [number, number, string][] = [
  [727, 134, "2"], [1254, 134, "3"], [948, 731, "2"], [1476, 731, "3"],
];

function Viewport() {
  return (
    <div className="min-h-0 flex-1 overflow-hidden bg-black">
      <svg className="block size-full" viewBox="360 122 1176 622" preserveAspectRatio="xMidYMid slice" role="img" aria-label="三维视图">
        <path d="M722 122L953 744M1249 122L1480 744" stroke="#f00" fill="none" shapeRendering="crispEdges" />
        <g fill="#fff" fontSize="17" textAnchor="middle" className={UI}>
          {BUBBLES.map(([x, y, t]) => (
            <g key={`${x}`}>
              <circle cx={x} cy={y} r="12.500" fill="none" stroke="#0a7a0a" />
              <text x={x + 1} y={y + 6}>{t}</text>
            </g>
          ))}
        </g>
        <Solid faces={FRAME_BACK} />
        <Solid faces={FRAME_LEFT} />
        <Solid faces={FRAME_FRONT_BASE} />
        <Solid faces={PARAPET} />
        <path d="M821 390L925 664" stroke="#f00" strokeDasharray="3 2" shapeRendering="crispEdges" />
        <Solid faces={FRAME_FRONT} />
        <Solid faces={FRAME_MID} />
        <Solid faces={FRAME_RIGHT} />
        <g fill="none" stroke="#fff" strokeOpacity="0.5">
          <circle cx="1093.500" cy="433" r="276.500" />
          <circle cx="1093.500" cy="156.500" r="17.500" />
          <circle cx="1093.500" cy="709.500" r="17.500" />
          <circle cx="817" cy="433" r="17.500" />
          <circle cx="1370" cy="433" r="17.500" />
          <path d="M1077 156.500h33M1077 709.500h33M817.500 417v33M1369.500 417v33" />
        </g>
        <g strokeWidth="4" fontSize="13" className={UI}>
          <path d="M415 693L453 687.500" stroke="#f00" />
          <path d="M448 683l12 3-10 6z" fill="#f00" />
          <path d="M415 693L403 661" stroke="#0f0" />
          <path d="M400 650l-3 12 9-2z" fill="#0f0" />
          <text x="420" y="678" fill="#0080ff">Z</text>
          <path d="M415 693L428 676" stroke="#0080ff" />
          <path d="M432 671l-2 10-7-5z" fill="#0080ff" stroke="#0080ff" strokeWidth="1" />
          <text x="409" y="660" fill="#00c000">Y</text>
          <text x="443" y="678" fill="#a01010">X</text>
        </g>
      </svg>
    </div>
  );
}

function Spin({ label, value, width }: { label: string; value: string; width: string }) {
  return (
    <span className="ml-1 flex h-5 shrink-0 items-stretch gap-px">
      <input aria-label={label} defaultValue={value} disabled className={`border border-[#fafafa] bg-[#ececec] pr-0.5 text-right text-[#808080] ${width}`} />
      <span className="flex w-[13px] flex-col justify-around border border-[#c4c4c4] bg-[#f4f4f4]">
        <svg className="mx-auto h-[3px] w-[5px]" viewBox="0 0 5 3"><path d="M0 3L2.500 0 5 3z" fill="#999" /></svg>
        <span className="h-px bg-[#c4c4c4]" />
        <svg className="mx-auto h-[3px] w-[5px]" viewBox="0 0 5 3"><path d="M0 0h5L2.500 3z" fill="#999" /></svg>
      </span>
    </span>
  );
}

function SnapBar() {
  return (
    <div className="flex h-[29px] shrink-0">
      <Group>
        <Grip />
        <Tool icon="ortho" label="正交" />
        <Tool icon="snap" label="对象捕捉" pressed />
        <Tool icon="dyn" label="动态输入" pressed />
      </Group>
      <Group>
        <Grip />
        <Tool icon="cross" label="交点" />
        <Tool icon="perp" label="垂点" pressed />
        <Tool icon="mid" label="中点" pressed />
        <Tool icon="vertex" label="顶点" />
        <Tool icon="coord" label="坐标" />
      </Group>
      <Group>
        <Grip />
        <Combo value="不偏移" label="偏移方式" width="w-[57px]" />
        <Sep />
        <span className="ml-0.5 text-[#7a7a7a]">X=</span>
        <Spin label="X" value="0" width="w-[42px]" />
        <span className="ml-[3px] text-[#7a7a7a]">mm</span>
        <span className="ml-1 text-[#7a7a7a]">Y=</span>
        <Spin label="Y" value="0" width="w-[42px]" />
        <span className="ml-[3px] text-[#7a7a7a]">mm</span>
        <Sep />
        <label className="ml-0.5 flex items-center gap-[7px]">
          <input type="checkbox" className={CHECK} />
          旋转
        </label>
        <Spin label="旋转角度" value="0.000" width="w-[52px]" />
        <span className="ml-1 text-[#7a7a7a]">°</span>
      </Group>
    </div>
  );
}

const COLUMNS: [string, string][] = [
  ["", "w-[34px]"], ["筋号", "w-[73px]"], ["直径(mm)", "w-[56px]"], ["级别", "w-[36px]"], ["图号", "w-[33px]"],
  ["图形", "w-[201px]"], ["计算公式", "w-[166px]"], ["公式描述", "w-[156px]"], ["长度(mm)", "w-[61px]"], ["根数", "w-[38px]"],
  ["搭接", "w-[39px]"], ["损耗(%)", "w-[49px]"], ["单重(kg)", "w-[61px]"], ["总重(kg)", "w-[61px]"], ["钢筋归类", "w-[71px]"], ["搭接形式", "w-[74px]"],
];

function RebarPanel() {
  return (
    <section className="flex h-[194px] shrink-0">
      <div className="flex w-3 shrink-0 flex-col items-center gap-1">
        <button type="button" aria-label="关闭钢筋编辑" className="mt-px flex size-2.5 shrink-0 items-center justify-center border border-[#444] bg-white">
          <svg className="size-2" viewBox="0 0 8 8">
            <path d="M1 1l6 6M7 1L1 7" stroke="#6b2020" strokeWidth="1.300" />
          </svg>
        </button>
        <span className="w-2 flex-1 bg-[radial-gradient(circle,#b3b3b3_1px,transparent_1.5px)] bg-[length:4px_5px]" />
      </div>
      <div className="flex min-w-0 flex-1 flex-col border-l border-[#8f939c] bg-white">
        <div role="toolbar" className={`flex h-7 shrink-0 items-center border-b border-[#9aa1b0] ${BAR_FILL}`}>
          <Tool icon="first" name="第一条" disabled />
          <Tool icon="prev" name="上一条" disabled />
          <Tool icon="next" name="下一条" disabled />
          <Tool icon="last" name="最后一条" disabled />
          <Sep />
          <Tool icon="up" name="上移" disabled />
          <Tool icon="down" name="下移" disabled />
          <Sep />
          <Tool icon="insert" label="插入" disabled />
          <Tool icon="remove" label="删除" disabled />
          <Tool icon="scale" label="缩尺配筋" disabled />
          <Tool icon="info" label="钢筋信息" disabled />
          <Tool icon="other" label="其他" menu />
          <span className="w-1" />
          <Tool label="关闭" />
          <Sep />
          <span className="ml-1 whitespace-nowrap">单构件钢筋总重(kg)：0</span>
        </div>
        <div className="min-h-0 flex-1 overflow-hidden">
          <table className={`w-[1209px] table-fixed border-separate border-spacing-0 ${SONG}`}>
            <thead>
              <tr className="h-5">
                {COLUMNS.map(([label, width], i) => (
                  <th key={i} className={`${CELL} whitespace-nowrap ${width} ${i === 2 ? GOLD : HEAD}`}>{label}</th>
                ))}
              </tr>
            </thead>
            <tbody>
              <tr className="h-[19px]">
                <th className={`${CELL} bg-[#fdd28b] font-normal`}>1*</th>
                {COLUMNS.slice(1).map((_, i) => (
                  <td key={i} className={`${CELL} ${i === 1 ? "border-l border-l-black bg-[#dfefff]" : ""}`} />
                ))}
              </tr>
            </tbody>
          </table>
        </div>
      </div>
    </section>
  );
}

function Markup() {
  return (
    <svg className="pointer-events-none absolute inset-0 size-full" aria-hidden="true">
      <g fill="none" stroke="#fb3838">
        <ellipse cx="470" cy="111.500" rx="42" ry="27.500" strokeWidth="6.500" />
        <ellipse cx="159.500" cy="150.500" rx="48.500" ry="16" strokeWidth="6" />
        <ellipse cx="925" cy="459" rx="150" ry="211.500" strokeWidth="6.500" />
      </g>
      <g fill="#fb3838">
        <path d="M270 132L400 128 454 124.500 453 120 473 127 454 135 455 130.500 400 131z" />
        <path d="M505 133L640 214 808 322 813 319 819 335 802 333 805 328 636 219z" />
      </g>
    </svg>
  );
}

export default function App() {
  return (
    <div className={`relative flex h-screen flex-col overflow-hidden bg-[#f0f0f0] text-xs leading-4 text-black ${UI}`}>
      <TopBar />
      <div className="flex min-h-0 flex-1">
        <ModulePanel />
        <div className="ml-[5px] flex w-[279px] shrink-0 flex-col pt-0.5">
          <ComponentList />
          <PropertyEditor />
        </div>
        <main className="ml-[3px] flex min-w-0 flex-1 flex-col">
          <EditBars />
          <Viewport />
          <SnapBar />
          <div className="h-[3px] shrink-0" />
          <RebarPanel />
        </main>
      </div>
      <Markup />
    </div>
  );
}
